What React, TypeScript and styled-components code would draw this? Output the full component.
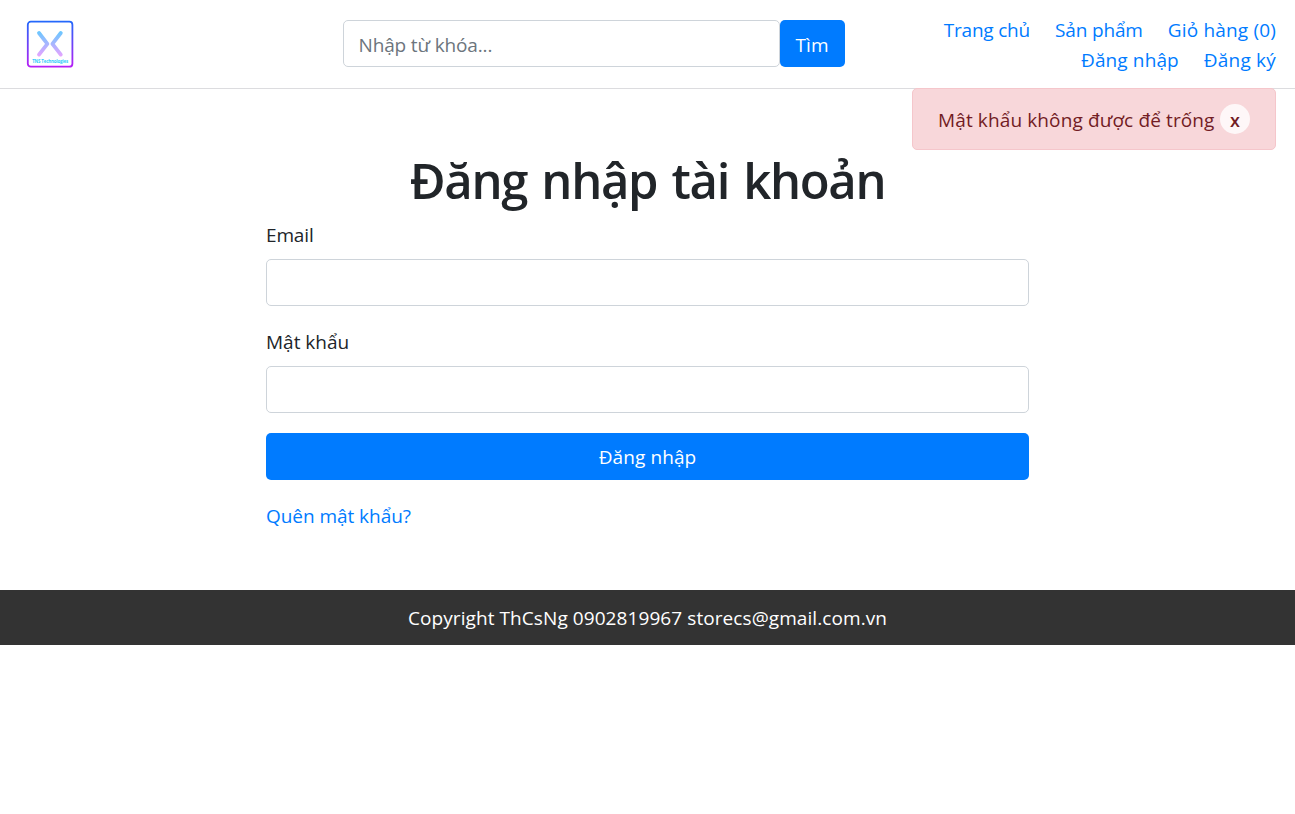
import React from 'react';
import styled, { createGlobalStyle } from 'styled-components';

const GlobalStyle = createGlobalStyle`
  *, *::before, *::after { box-sizing: border-box; }
  body {
    margin: 0;
    background: #fff;
    color: #212529;
    font-family: 'Segoe UI', 'Open Sans', 'Noto Sans', sans-serif;
    font-size: 19px;
    line-height: 30px;
  }
`;

const Header = styled.header`
  position: relative;
  display: flex;
  align-items: flex-start;
  justify-content: space-between;
  height: 89px;
  padding: 15px 19px 0 25px;
  border-bottom: 1px solid #dcdcdf;
`;

const LogoLink = styled.a`
  display: block;
  width: 50px;
  height: 50px;
  margin-top: 4px;
`;

const SearchForm = styled.form`
  display: flex;
  width: 502px;
  margin: 5px 0 0 186px;
`;

const Input = styled.input`
  display: block;
  width: 100%;
  min-width: 0;
  height: 47px;
  padding: 10px 15px 7px;
  border: 1px solid #ced4da;
  border-radius: 5px;
  background: #fff;
  color: #495057;
  font: inherit;
  letter-spacing: -0.15px;
  outline: none;
  &::placeholder { color: #6c757d; opacity: 1; }
`;

const Button = styled.button<{ $block?: boolean }>`
  display: block;
  flex: none;
  width: ${p => (p.$block ? '100%' : '65px')};
  height: 47px;
  padding: ${p => (p.$block ? '0' : '2px 0 0')};
  border: 0;
  border-radius: 5px;
  background: #007bff;
  color: #fff;
  font: inherit;
  letter-spacing: 0.1px;
`;

const Nav = styled.nav`
  display: flex;
  flex-wrap: wrap;
  justify-content: flex-end;
  gap: 0 25px;
  width: 350px;
`;

const Link = styled.a<{ $track?: number }>`
  color: #007bff;
  text-decoration: none;
  letter-spacing: ${p => p.$track ?? 0}px;
  white-space: nowrap;
`;

const Alert = styled.div`
  position: absolute;
  top: 88px;
  right: 19px;
  z-index: 2;
  display: flex;
  align-items: flex-start;
  justify-content: space-between;
  width: 364px;
  height: 62px;
  padding: 15px 25px;
  border: 1px solid #f5c6cb;
  border-radius: 5px;
  background: #f8d7da;
  color: #721c24;
  white-space: nowrap;
`;

const AlertText = styled.span`
  padding-top: 1px;
  letter-spacing: 0.12px;
`;

const Close = styled.button`
  width: 30px;
  height: 30px;
  padding: 2px 0 0;
  border: 0;
  border-radius: 50%;
  background: rgba(255, 255, 255, 0.8);
  color: #721c24;
  font: inherit;
  font-size: 18px;
  font-weight: 600;
  line-height: 28px;
`;

const Main = styled.main`
  width: 763px;
  margin: 0 auto;
  padding: 61px 0 59px;
`;

const Title = styled.h1`
  margin: 0 0 10px;
  font-size: 49px;
  font-weight: 550;
  letter-spacing: -1.35px;
  word-spacing: 3px;
  line-height: 60px;
  text-align: center;
  white-space: nowrap;
`;

const Field = styled.div`
  display: flex;
  flex-direction: column;
  margin-bottom: 20px;
`;

const Label = styled.label<{ $track?: number }>`
  margin-bottom: 7px;
  line-height: 33px;
  letter-spacing: ${p => p.$track ?? 0}px;
`;

const LoginForm = styled.form`
  margin-top: -1px;
`;

const Forgot = styled.p`
  margin: 21px 0 0;
`;

const Footer = styled.footer`
  height: 55px;
  padding-top: 13px;
  background: #333;
  color: #fff;
  letter-spacing: 0.08px;
  text-align: center;
`;

function Logo() {
  return (
    <svg width="50" height="50" viewBox="0 0 50 50" aria-label="TNS Technologies">
      <defs>
        <linearGradient id="frame" x1="0" y1="0" x2="0" y2="1">
          <stop offset="0" stopColor="#2468fb" />
          <stop offset="1" stopColor="#b51ff5" />
        </linearGradient>
        <linearGradient id="mark" gradientUnits="userSpaceOnUse" x1="0" y1="12" x2="0" y2="37">
          <stop offset="0" stopColor="#67c8ff" />
          <stop offset="1" stopColor="#e4a4ff" />
        </linearGradient>
      </defs>
      <rect x="2.8" y="2.7" width="44.6" height="45" rx="3" fill="none" stroke="url(#frame)" strokeWidth="1.8" />
      <path d="M14 14 L22.4 24.8 L14 35.6 M35.8 14 L27.4 24.8 L35.8 35.6" fill="none" stroke="url(#mark)" strokeWidth="3.8" strokeLinecap="round" strokeLinejoin="round" />
      <text x="25.2" y="44.3" textAnchor="middle" textLength="36" fontSize="4.4" fontWeight="700" fontFamily="Open Sans, sans-serif" fill="#2fcdfa">TNS Technologies</text>
    </svg>
  );
}

export default function App() {
  return (
    <>
      <GlobalStyle />
      <Header>
        <LogoLink><Logo /></LogoLink>
        <SearchForm>
          <Input placeholder="Nhập từ khóa..." />
          <Button type="button">Tìm</Button>
        </SearchForm>
        <Nav>
          <Link $track={-0.2}>Trang chủ</Link>
          <Link $track={-0.15}>Sản phẩm</Link>
          <Link $track={0.17}>Giỏ hàng (0)</Link>
          <Link $track={0.12}>Đăng nhập</Link>
          <Link $track={0.2}>Đăng ký</Link>
        </Nav>
        <Alert role="alert">
          <AlertText>Mật khẩu không được để trống</AlertText>
          <Close type="button">x</Close>
        </Alert>
      </Header>
      <Main>
        <Title>Đăng nhập tài khoản</Title>
        <LoginForm>
          <Field>
            <Label htmlFor="email" $track={-0.15}>Email</Label>
            <Input id="email" type="email" />
          </Field>
          <Field>
            <Label htmlFor="password">Mật khẩu</Label>
            <Input id="password" type="password" />
          </Field>
          <Button type="button" $block>Đăng nhập</Button>
        </LoginForm>
        <Forgot><Link $track={-0.05}>Quên mật khẩu?</Link></Forgot>
      </Main>
      <Footer>Copyright ThCsNg 0902819967 storecs@gmail.com.vn</Footer>
    </>
  );
}
